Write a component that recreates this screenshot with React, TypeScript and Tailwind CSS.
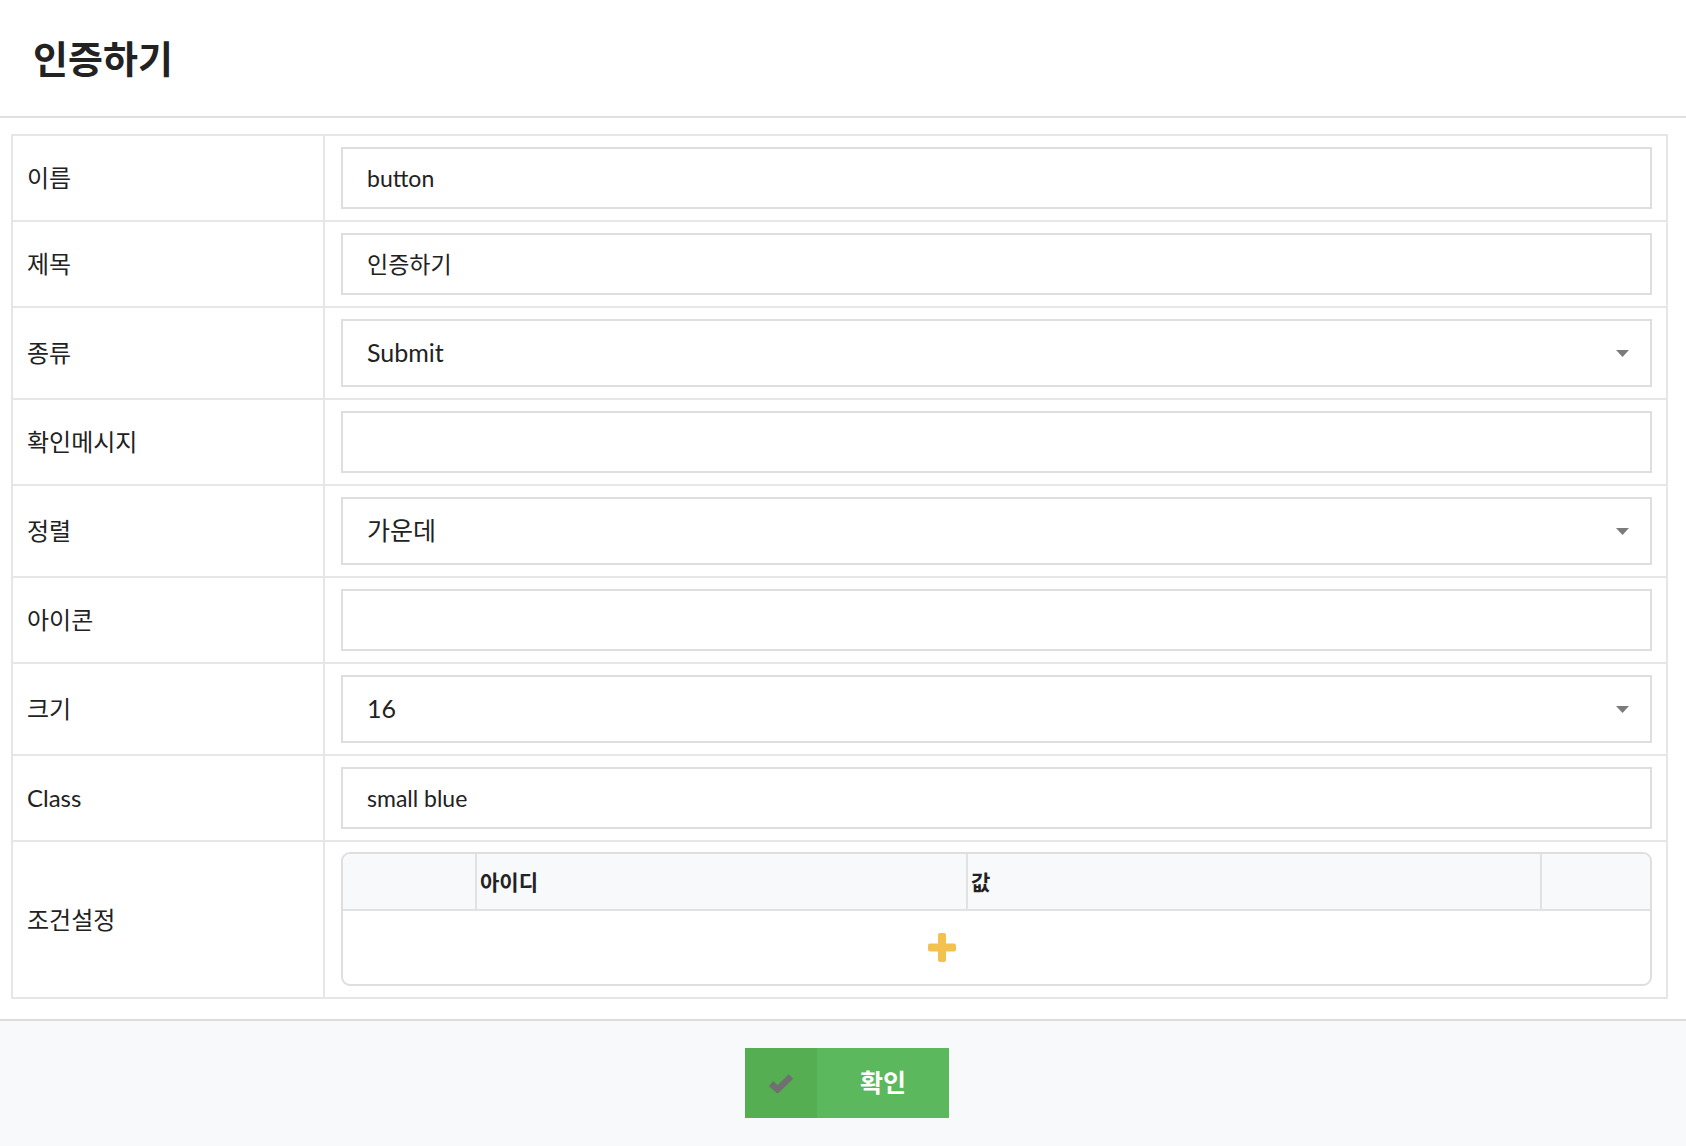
import React from "react";

type Row = { label: string; kind: "text" | "select"; value: string };

const rows: Row[] = [
  { label: "이름", kind: "text", value: "button" },
  { label: "제목", kind: "text", value: "인증하기" },
  { label: "종류", kind: "select", value: "Submit" },
  { label: "확인메시지", kind: "text", value: "" },
  { label: "정렬", kind: "select", value: "가운데" },
  { label: "아이콘", kind: "text", value: "" },
  { label: "크기", kind: "select", value: "16" },
  { label: "Class", kind: "text", value: "small blue" },
];

const font = { fontFamily: "Lato, 'Noto Sans CJK KR', sans-serif" };

function Caret() {
  return (
    <svg width="13" height="7" viewBox="0 0 13 7" className="shrink-0">
      <polygon points="0,0 13,0 6.5,7" fill="#7b7b7b" />
    </svg>
  );
}

function Field({ row }: { row: Row }) {
  if (row.kind === "select") {
    return (
      <div className="flex h-[68px] items-center justify-between border-2 border-[#dedede] bg-white pl-[24px] pr-[21px] text-[25px] text-[#222]">
        <span>{row.value}</span>
        <Caret />
      </div>
    );
  }
  return (
    <div className="flex h-[62px] items-center border-2 border-[#dedede] bg-white px-[24px] text-[23px] text-[#222]">
      <span>{row.value}</span>
    </div>
  );
}

export default function App() {
  return (
    <div className="flex min-h-screen flex-col bg-white" style={font}>
      <header className="flex h-[118px] items-center border-b-2 border-[#e0e0e0] pl-[33px]">
        <h1 className="text-[38px] font-bold leading-none text-[#222]">인증하기</h1>
      </header>

      <div className="ml-[11px] mr-[18px] mt-[16px] border-2 border-[#e6e6e6]">
        {rows.map((row) => (
          <div key={row.label} className="flex border-b-2 border-[#e6e6e6]">
            <div className="flex w-[312px] shrink-0 items-center border-r-2 border-[#e6e6e6] pl-[14px] text-[24px] text-[#222]">
              {row.label}
            </div>
            <div className="flex-1 py-[11px] pl-[16px] pr-[14px]">
              <Field row={row} />
            </div>
          </div>
        ))}
        <div className="flex">
          <div className="flex w-[312px] shrink-0 items-center border-r-2 border-[#e6e6e6] pl-[14px] text-[24px] text-[#222]">
            조건설정
          </div>
          <div className="flex-1 pb-[11px] pl-[16px] pr-[14px] pt-[10px]">
            <div className="overflow-hidden rounded-[9px] border-2 border-[#dedede]">
              <div className="flex h-[57px] border-b-2 border-[#e2e2e2] bg-[#f8f9fa] text-[21px] font-bold text-[#222]">
                <div className="w-[134px] border-r-2 border-[#e2e2e2]" />
                <div className="flex w-[491px] items-center border-r-2 border-[#e2e2e2] pl-[3px]">아이디</div>
                <div className="flex w-[574px] items-center border-r-2 border-[#e2e2e2] pl-[3px]">값</div>
                <div className="flex-1" />
              </div>
              <div className="flex h-[73px]">
                <div className="flex w-[1197px] items-center justify-center">
                  <svg width="28" height="29" viewBox="0 0 28 29">
                    <rect x="10" y="0" width="8" height="29" rx="2" fill="#f2c14e" />
                    <rect x="0" y="10.5" width="28" height="8" rx="2" fill="#f2c14e" />
                  </svg>
                </div>
                <div className="flex-1" />
              </div>
            </div>
          </div>
        </div>
      </div>

      <footer className="mt-[20px] flex flex-1 items-start justify-center border-t-2 border-[#dcdcdc] bg-[#f8f9fa] pl-[8px] pt-[27px]">
        <button className="flex h-[70px] w-[204px] items-stretch bg-[#5cb85c]">
          <span className="flex w-[72px] items-center justify-center bg-[#55ae51]">
            <svg width="26" height="20" viewBox="0 0 26 20">
              <polyline
                points="3,10.5 9.5,16.5 23,3.5"
                fill="none"
                stroke="#707070"
                strokeWidth="6.5"
                strokeLinejoin="miter"
              />
            </svg>
          </span>
          <span className="flex flex-1 items-center justify-center text-[25px] font-bold text-white">확인</span>
        </button>
      </footer>
    </div>
  );
}
